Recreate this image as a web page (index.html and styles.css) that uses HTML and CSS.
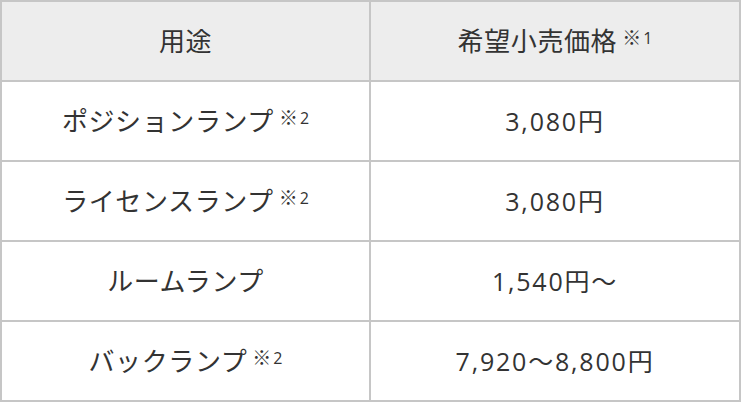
FILE: index.html
```html
<!DOCTYPE html>
<html lang="ja">
<head>
<meta charset="utf-8">
<link rel="stylesheet" href="styles.css">
</head>
<body>
<div class="table">
  <div class="cell head">用途</div>
  <div class="cell head">希望小売価格<span class="note"><span class="kome">※</span>1</span></div>
  <div class="cell">ポジションランプ<span class="note"><span class="kome">※</span>2</span></div>
  <div class="cell num">3,080円</div>
  <div class="cell">ライセンスランプ<span class="note"><span class="kome">※</span>2</span></div>
  <div class="cell num">3,080円</div>
  <div class="cell">ルームランプ</div>
  <div class="cell num">1,540円～</div>
  <div class="cell">バックランプ<span class="note"><span class="kome">※</span>2</span></div>
  <div class="cell num">7,920～8,800円</div>
</div>
</body>
</html>
```
FILE: styles.css
```css
html, body {
  margin: 0;
  padding: 0;
  background: #fff;
}
.table {
  width: 741px;
  box-sizing: border-box;
  display: grid;
  grid-template-columns: 367px 368px;
  grid-auto-rows: 78px;
  gap: 2px;
  padding: 2px;
  background: #c6c6c6;
  font-family: "Open Sans", "Noto Sans CJK JP", sans-serif;
  color: #333;
  font-size: 26px;
  letter-spacing: 0.6px;
}
.cell {
  background: #fff;
  display: flex;
  align-items: center;
  justify-content: center;
  line-height: 1;
}
.head {
  background: #ededed;
}
.num {
  font-size: 25px;
  letter-spacing: 1.8px;
}
.note {
  display: inline-flex;
  align-items: baseline;
  font-size: 16px;
  letter-spacing: 0;
  position: relative;
  top: -4px;
  margin-left: 5px;
  gap: 2px;
}
.kome {
  font-size: 19px;
  line-height: 1;
  position: relative;
  top: 1px;
}
```
